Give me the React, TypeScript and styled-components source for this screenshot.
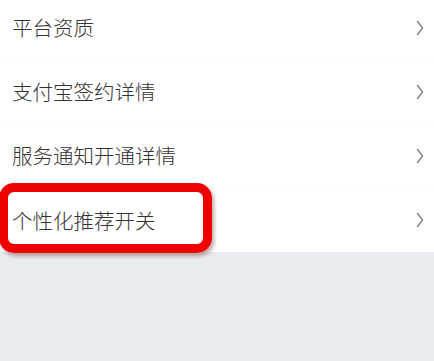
import React from 'react';
import styled, { createGlobalStyle } from 'styled-components';

const GlobalStyle = createGlobalStyle`
  html, body {
    margin: 0;
    padding: 0;
    background: #e9ecf0;
    overflow: hidden;
  }
  body {
    font-family: "Noto Sans CJK SC", "Noto Sans", sans-serif;
  }
`;

const Page = styled.div`
  width: 434px;
  height: 361px;
  background: #e9ecf0;
  overflow: hidden;
`;

const List = styled.ul`
  list-style: none;
  margin: -4px 0 0;
  padding: 0;
  background: #ffffff;
`;

const Row = styled.li`
  position: relative;
  height: 64px;
  display: flex;
  align-items: center;
  justify-content: space-between;
  padding: 0 10px 0 12px;
  border-bottom: 1px solid #fbfbfb;
  box-sizing: border-box;

  &:last-child {
    border-bottom: none;
  }
`;

const Label = styled.span`
  font-size: 20.5px;
  font-weight: 300;
  color: #333333;
  line-height: 1;
`;

const Chevron = styled.svg`
  width: 8px;
  height: 16px;
  color: #8c8c8c;
`;

const Highlight = styled.div`
  position: absolute;
  left: -1px;
  top: -5px;
  width: 213px;
  height: 70px;
  box-sizing: border-box;
  border: 9px solid #f00000;
  border-radius: 15px;
  box-shadow: 2px 3px 4px rgba(60, 0, 0, 0.35);
  pointer-events: none;
`;

const items = ['平台资质', '支付宝签约详情', '服务通知开通详情', '个性化推荐开关'];

export default function App() {
  return (
    <Page>
      <GlobalStyle />
      <List>
        {items.map((text, i) => (
          <Row key={text}>
            <Label>{text}</Label>
            <Chevron viewBox="0 0 8 16" fill="none">
              <path d="M1.5 1.5 L6.5 8 L1.5 14.5" stroke="currentColor" strokeWidth="1.6" strokeLinecap="round" strokeLinejoin="round" />
            </Chevron>
            {i === items.length - 1 && <Highlight />}
          </Row>
        ))}
      </List>
    </Page>
  );
}
